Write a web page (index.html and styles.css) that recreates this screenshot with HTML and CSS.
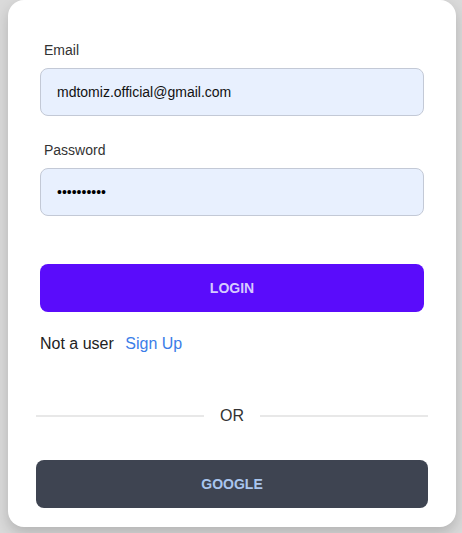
FILE: index.html
```html
<!DOCTYPE html>
<html>
<head>
<meta charset="utf-8">
<link rel="stylesheet" href="styles.css">
</head>
<body>
<div class="card">
  <form class="form">
    <label class="label">Email</label>
    <div class="input">mdtomiz.official@gmail.com</div>
    <label class="label label-pw">Password</label>
    <div class="input input-pw">••••••••••</div>
    <button type="button" class="btn btn-login">LOGIN</button>
    <p class="signup">Not a user <a class="link">Sign Up</a></p>
  </form>
  <div class="social">
    <div class="divider"><span class="line"></span><span class="or">OR</span><span class="line"></span></div>
    <button type="button" class="btn btn-google">GOOGLE</button>
  </div>
</div>
</body>
</html>
```

FILE: styles.css
```css
html, body {
  margin: 0;
  padding: 0;
}
body {
  background: #dadada;
  font-family: "Liberation Sans", Arial, sans-serif;
  padding: 0 6px 0 8px;
  height: 533px;
  box-sizing: border-box;
}
.card {
  width: 448px;
  background: #ffffff;
  border-radius: 16px;
  box-shadow: 0 6px 14px rgba(0, 0, 0, 0.18);
  padding-bottom: 19px;
  box-sizing: border-box;
}
.form {
  display: flex;
  flex-direction: column;
  padding: 40px 32px 0 32px;
  margin: 0;
}
.label {
  font-size: 14px;
  line-height: 20px;
  color: #333333;
  padding-left: 4px;
  margin-bottom: 8px;
}
.label-pw {
  margin-top: 24px;
}
.input {
  height: 48px;
  box-sizing: border-box;
  border: 1px solid #c3c9d6;
  border-radius: 8px;
  background: #e8f0fe;
  padding: 0 16px;
  display: flex;
  align-items: center;
  font-size: 14px;
  color: #111111;
}
.input-pw {
  font-size: 14px;
  color: #000000;
}
.btn {
  height: 48px;
  border: none;
  border-radius: 8px;
  font-family: "Liberation Sans", Arial, sans-serif;
  font-weight: bold;
  font-size: 14px;
  display: flex;
  align-items: center;
  justify-content: center;
  padding: 0;
  width: 100%;
}
.btn-login {
  margin-top: 48px;
  background: #5a0cfb;
  color: #d6caff;
}
.signup {
  margin: 20px 0 0 0;
  font-size: 16px;
  line-height: 24px;
  color: #222222;
}
.link {
  color: #3b7de8;
  margin-left: 7px;
}
.social {
  padding: 48px 28px 0 28px;
}
.divider {
  display: flex;
  align-items: center;
  height: 24px;
}
.line {
  flex: 1;
  height: 2px;
  background: #e8e8e8;
}
.or {
  font-size: 16px;
  color: #333333;
  padding: 0 16px;
}
.btn-google {
  margin-top: 32px;
  background: #3e4451;
  color: #a9c6ef;
}
```
